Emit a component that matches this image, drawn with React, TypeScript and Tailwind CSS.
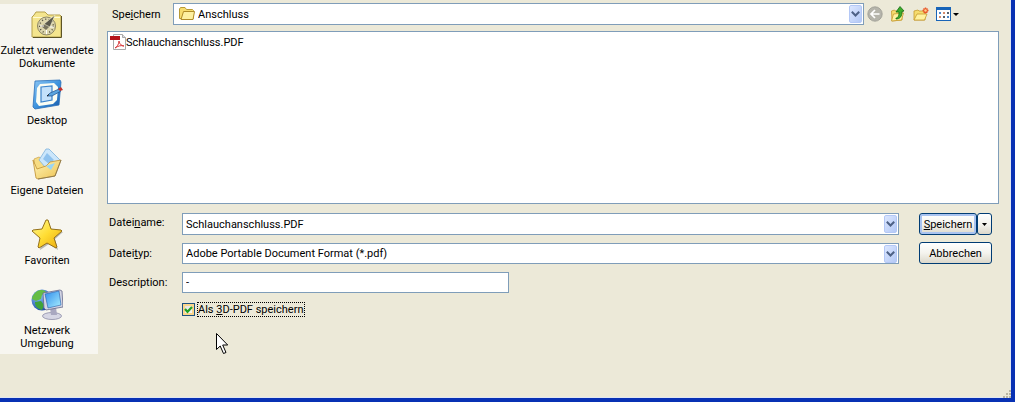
import React, { useState } from 'react';

const fieldBox = 'flex items-center border border-[#7f9db9] bg-white';
const xpButton =
  'h-[22px] rounded-[3px] border border-[#003c74] bg-linear-to-b from-white via-[#f4f3ee] to-[#dcd8cb] text-center';

function RecentIcon() {
  return (
    <svg width="32" height="32" viewBox="0 0 32 32">
      <path d="M1 29V9l2-2 2-3h9l3 3h12l1 1v21z" fill="#f4e58e" stroke="#b5a14c" />
      <path d="M2 9.500h27" stroke="#fffbd2" />
      <path d="M30.500 8v21.500H2" fill="none" stroke="#5c5326" />
      <circle cx="15.500" cy="18" r="9" fill="#ddd6ac" stroke="#8b8463" />
      <circle cx="15.500" cy="18" r="6.800" fill="none" stroke="#4f4c3c" strokeWidth="1.500" strokeDasharray="1 2.400" />
      <path d="M10 18l6-3 3 3-4 4z" fill="#77735f" />
      <path d="M13 16L24 7l-5 12z" fill="#5a584c" stroke="#f5f1d0" strokeWidth=".6" />
      <path d="M9 18h4M15.500 22v4M19 19h4" stroke="#fff" />
    </svg>
  );
}

function DesktopIcon() {
  return (
    <svg width="32" height="32" viewBox="0 0 32 32">
      <defs>
        <linearGradient id="desk" x1="0" y1="0" x2="1" y2="1">
          <stop offset="0" stopColor="#8ec8f5" />
          <stop offset=".5" stopColor="#3f94de" />
          <stop offset="1" stopColor="#1558a8" />
        </linearGradient>
      </defs>
      <path d="M4 3l25-1 1 2-2 23-24 4-2-2z" fill="url(#desk)" stroke="#2b6fb8" strokeWidth=".8" />
      <path d="M9 6l14-1 4 4-1 13-4 4-14 2-3-4 1-14z" fill="#fbfdf3" />
      <path d="M10 9l11-1v14l-11 2z" fill="#c3e1fb" stroke="#3b83cc" strokeWidth="1.200" />
      <path d="M16 18l3-3 9-4 2 2-9 5z" fill="#5aa4df" stroke="#1c4e8b" strokeWidth=".7" />
      <path d="M27 11l3-2 2 3-3 1z" fill="#c4322c" />
      <path d="M16 18l2-1.500" stroke="#222" />
    </svg>
  );
}

function DocumentsIcon() {
  return (
    <svg width="32" height="32" viewBox="0 0 32 32">
      <defs>
        <linearGradient id="docs" x1="0" y1="0" x2="1" y2="1">
          <stop offset="0" stopColor="#fff7bd" />
          <stop offset="1" stopColor="#edc14f" />
        </linearGradient>
      </defs>
      <path d="M3 11l5-2 3 2 14-1v14l-20 4z" fill="#f7dc83" stroke="#c9a04b" strokeWidth=".7" />
      <path d="M15 1h3l11 11-8 15L8 12z" fill="#cbe6fb" stroke="#7fb2dc" strokeWidth=".8" />
      <path d="M16 5l7 7-5 4-6-5z" fill="#8fc2ee" />
      <path d="M2 12l3 18 2 1 17-3 6-16-11 2-4 4-9 3z" fill="url(#docs)" stroke="#c29235" strokeWidth=".8" />
      <path d="M15 18l9-3-4 7z" fill="#9ad6f5" />
      <path d="M7 31l17-3 6-16" fill="none" stroke="#7f704c" strokeWidth=".8" />
    </svg>
  );
}

function FavoritesIcon() {
  return (
    <svg width="32" height="32" viewBox="0 0 32 32">
      <defs>
        <linearGradient id="fav" x1="0" y1="0" x2="1" y2="1">
          <stop offset="0" stopColor="#fffa96" />
          <stop offset=".5" stopColor="#ffdc32" />
          <stop offset="1" stopColor="#e9a70b" />
        </linearGradient>
      </defs>
      <path d="M16 2l4 10 11 1-8 7 3 11-9-6-9 6 2-11-8-7 10-1z" fill="#77756c" opacity=".5" transform="translate(1 1)" />
      <path d="M15 2h2l3 9 10 1 1 1-8 7 3 9-1 1-9-5-8 5-1-1 2-9-8-7 1-1 9-1z" fill="url(#fav)" stroke="#94701a" strokeLinejoin="round" />
    </svg>
  );
}

function NetworkIcon() {
  return (
    <svg width="32" height="32" viewBox="0 0 32 32">
      <defs>
        <radialGradient id="globe" cx=".35" cy=".3" r=".8">
          <stop offset="0" stopColor="#8fc9ff" />
          <stop offset="1" stopColor="#123f9e" />
        </radialGradient>
        <linearGradient id="screen" x1="0" y1="0" x2="1" y2="1">
          <stop offset="0" stopColor="#2e8cec" />
          <stop offset="1" stopColor="#a9efff" />
        </linearGradient>
      </defs>
      <circle cx="11" cy="12" r="10.500" fill="url(#globe)" />
      <path d="M5 4c4-3 9-2 10 0l-4 3-1 4-5 2-4-2c0-3 2-5 4-7z" fill="#65bd45" />
      <path d="M4 14l6-1 3 4-2 5c-4-1-7-3-7-8z" fill="#3fa33a" />
      <ellipse cx="21" cy="28" rx="9.500" ry="3.500" fill="#d6d6e4" stroke="#8a8aa6" strokeWidth=".8" />
      <path d="M19 20l6-1 1 8h-6z" fill="#a9a8c0" />
      <path d="M12 5l17-3 2 1 1 16-17 3-2-2z" fill="#d4d5e4" stroke="#66698c" strokeWidth=".8" />
      <path d="M14 6l14-3 2 14-13 3z" fill="url(#screen)" stroke="#235ba8" strokeWidth=".6" />
    </svg>
  );
}

function FolderIcon() {
  return (
    <svg width="16" height="16" viewBox="0 0 16 16" className="shrink-0">
      <path d="M.5 12.500V3l1-1.500h4.500l1.500 2h6l1 1v8z" fill="#f7dd6e" stroke="#b99a35" />
      <path d="M2 13.500L4.500 5.500h11l-1.500 8z" fill="#fdf0a0" stroke="#b08c28" />
    </svg>
  );
}

function PdfIcon() {
  return (
    <svg width="16" height="16" viewBox="0 0 16 16" className="shrink-0">
      <path d="M3.500.5h9l3 3v12h-12z" fill="#fff" stroke="#a9a9a9" />
      <path d="M12.500.5v3h3" fill="#ddd" stroke="#a9a9a9" />
      <path d="M0 2h10v4H0z" fill="#b5141a" />
      <path d="M5 14c2-1 4-4 4-7 0 3 3 5 5 5-3-1-6 0-9 2z" fill="none" stroke="#d8383a" />
    </svg>
  );
}

function BackIcon() {
  return (
    <svg width="16" height="16" viewBox="0 0 16 16">
      <circle cx="8" cy="8" r="7.200" fill="#b5b4ab" stroke="#9b9a92" strokeWidth=".8" />
      <path d="M12.500 8H4.500M8 4L4 8l4 4" fill="none" stroke="#fff" strokeWidth="1.700" />
    </svg>
  );
}

function UpIcon() {
  return (
    <svg width="16" height="16" viewBox="0 0 16 16">
      <path d="M1.500 5l3-1 1 1H12v9l-10 1z" fill="#f6dc6f" stroke="#c79b2f" strokeWidth=".8" />
      <path d="M1.500 15l2-7 10-1-2 7z" fill="#fff2a0" stroke="#c79b2f" strokeWidth=".8" />
      <path d="M6 12c2 0 3-2 3-6H6L10 .5 14 5l-2 .5c0 5-2 7.500-6 7.500z" fill="#3dac2b" stroke="#156b12" strokeWidth=".8" />
    </svg>
  );
}

function NewFolderIcon() {
  return (
    <svg width="16" height="16" viewBox="0 0 16 16">
      <path d="M1 5l4-1 1 1h6v9H1z" fill="#f6dc6f" stroke="#c79b2f" strokeWidth=".8" />
      <path d="M1 14l3-6h10l-2.500 6z" fill="#fff2a0" stroke="#c79b2f" strokeWidth=".8" />
      <path d="M12.500 1.500v6M9.500 4.500h6M10.500 2.500l4 4M14.500 2.500l-4 4" stroke="#e8572a" strokeWidth="1.400" />
      <circle cx="12.500" cy="4.500" r="1.200" fill="#ffd08a" />
    </svg>
  );
}

function ViewsIcon() {
  return (
    <svg width="23" height="16" viewBox="0 0 23 16">
      <rect x=".5" y="1.500" width="14" height="13" fill="#fff" stroke="#1864b8" />
      <path d="M0 1h15v3H0z" fill="#1864b8" />
      <path d="M3 6h2v2H3zM11 10h2v2h-2z" fill="#4a86c8" />
      <path d="M7 6h2v2H7zM3 10h2v2H3z" fill="#d78b6a" />
      <path d="M11 6h2v2h-2zM7 10h2v2H7z" fill="#54616d" />
      <path d="M17 7h6l-3 3z" fill="#000" />
    </svg>
  );
}

function Chevron() {
  return (
    <span className="mr-px flex h-[18px] w-[13px] shrink-0 items-center justify-center rounded-[2px] border border-[#b4c8f6] bg-linear-to-br from-[#dce7ff] to-[#b3c8f5]">
      <svg width="9" height="6" viewBox="0 0 9 6">
        <path d="M.8.8l3.700 3.700L8.200.8" fill="none" stroke="#4d6185" strokeWidth="2" />
      </svg>
    </span>
  );
}

const places = [
  { label: 'Zuletzt verwendete Dokumente', icon: <RecentIcon /> },
  { label: 'Desktop', icon: <DesktopIcon /> },
  { label: 'Eigene Dateien', icon: <DocumentsIcon /> },
  { label: 'Favoriten', icon: <FavoritesIcon /> },
  { label: 'Netzwerk Umgebung', icon: <NetworkIcon /> },
];

const tools = [
  { label: 'Zurück', icon: <BackIcon /> },
  { label: 'Übergeordneter Ordner', icon: <UpIcon /> },
  { label: 'Neuer Ordner', icon: <NewFolderIcon /> },
  { label: 'Ansichten', icon: <ViewsIcon /> },
];

export default function App() {
  const [fileName, setFileName] = useState('Schlauchanschluss.PDF');
  const [description, setDescription] = useState('-');
  const [as3d, setAs3d] = useState(true);

  return (
    <div className="relative flex min-h-screen items-start border-r-4 border-b-4 border-[#0831b4] bg-[#ece9d8] font-[Roboto,'Liberation_Sans',sans-serif] text-[11px] leading-[13px] text-black shadow-[inset_-1px_-1px_0_#dfe6f2]">
      <nav className="mt-1 w-[98px] shrink-0 bg-[#f7f6f0]">
        {places.map((place) => (
          <button key={place.label} type="button" className="flex h-[70px] w-full flex-col items-center pt-1 pr-1">
            {place.icon}
            <span className="mt-1 w-full">{place.label}</span>
          </button>
        ))}
      </nav>

      <main className="min-w-0 flex-1 pt-[3px] pr-3 pl-[9px]">
        <div className="flex items-center">
          <label htmlFor="folder" className="w-[66px] shrink-0 pl-[5px]">
            Spe<u>i</u>chern
          </label>
          <div className={`${fieldBox} h-[22px] flex-1 pl-[5px]`}>
            <FolderIcon />
            <select id="folder" className="h-full flex-1 appearance-none pl-[3px] outline-none">
              <option>Anschluss</option>
            </select>
            <Chevron />
          </div>
          <div className="mr-10 ml-[3px] flex items-center gap-[7px]">
            {tools.map((tool) => (
              <button key={tool.label} type="button" aria-label={tool.label}>
                {tool.icon}
              </button>
            ))}
          </div>
        </div>

        <ul className="mt-[6px] h-[173px] border border-[#7f9db9] bg-white p-[2px]">
          <li className="flex items-center">
            <PdfIcon />
            Schlauchanschluss.PDF
          </li>
        </ul>

        <form className="mt-[9px] flex gap-5 pr-[7px]" onSubmit={(e) => e.preventDefault()}>
          <div className="flex flex-1 flex-col gap-2">
            <div className="flex">
              <label htmlFor="name" className="w-[75px] shrink-0 pt-[3px] pl-[2px]">
                Datei<u>n</u>ame:
              </label>
              <div className={`${fieldBox} h-[22px] flex-1`}>
                <input
                  id="name"
                  className="h-full min-w-0 flex-1 pl-[3px] outline-none"
                  value={fileName}
                  onChange={(e) => setFileName(e.target.value)}
                />
                <button type="button" aria-label="Dateinamen anzeigen">
                  <Chevron />
                </button>
              </div>
            </div>
            <div className="flex">
              <label htmlFor="type" className="w-[75px] shrink-0 pt-1 pl-[2px]">
                Datei<u>t</u>yp:
              </label>
              <div className={`${fieldBox} h-[21px] flex-1`}>
                <select id="type" className="h-full flex-1 appearance-none pl-[3px] outline-none">
                  <option>Adobe Portable Document Format (*.pdf)</option>
                </select>
                <Chevron />
              </div>
            </div>
            <div className="flex">
              <label htmlFor="description" className="w-[75px] shrink-0 pt-1 pl-[2px]">
                Description:
              </label>
              <input
                id="description"
                className="h-[21px] w-[327px] border border-[#7f9db9] bg-white pl-[3px] outline-none"
                value={description}
                onChange={(e) => setDescription(e.target.value)}
              />
            </div>
            <div className="flex items-center gap-[2px] pt-px pl-[75px]">
              <span className="grid">
                <input
                  id="as3d"
                  type="checkbox"
                  className="col-start-1 row-start-1 size-[13px] appearance-none border border-[#1c5180] bg-linear-to-br from-[#dcdcd7] to-white shadow-[inset_0_0_0_2px_#fbd68c]"
                  checked={as3d}
                  onChange={(e) => setAs3d(e.target.checked)}
                />
                {as3d && (
                  <svg width="13" height="13" viewBox="0 0 13 13" className="pointer-events-none col-start-1 row-start-1">
                    <path d="M3 6l2.500 2.800L10 4" fill="none" stroke="#21a121" strokeWidth="2.200" />
                  </svg>
                )}
              </span>
              <label htmlFor="as3d" className="border border-dotted border-black">
                Als <u>3</u>D-PDF speichern
              </label>
            </div>
          </div>

          <div className="flex w-[73px] flex-col gap-[7px]">
            <div className="flex">
              <button type="submit" className={`${xpButton} flex-1 shadow-[inset_0_0_0_2px_#a9c3f0]`}>
                <u>S</u>peichern
              </button>
              <button type="button" aria-label="Weitere Optionen" className={`${xpButton} flex w-[15px] items-center justify-center`}>
                <svg width="5" height="3" viewBox="0 0 5 3">
                  <path d="M0 0h5L2.500 3z" />
                </svg>
              </button>
            </div>
            <button type="button" className={xpButton}>
              Abbrechen
            </button>
          </div>
        </form>
      </main>

      {/* Size grip */}
      <svg width="8" height="8" viewBox="0 0 8 8" className="absolute right-0 bottom-0">
        <path d="M6 0h2v2H6zM6 3h2v2H6zM3 3h2v2H3zM0 6h2v2H0zM3 6h2v2H3zM6 6h2v2H6z" fill="#b8b4a2" />
      </svg>

      {/* Mouse pointer */}
      <svg width="13" height="22" viewBox="0 0 13 22" className="pointer-events-none absolute top-[333px] left-[216px]">
        <path d="M.5.500v16l3.700-3.500 3.300 7.500 2.500-1-3.300-7.500h5z" fill="#fff" stroke="#000" />
      </svg>
    </div>
  );
}
